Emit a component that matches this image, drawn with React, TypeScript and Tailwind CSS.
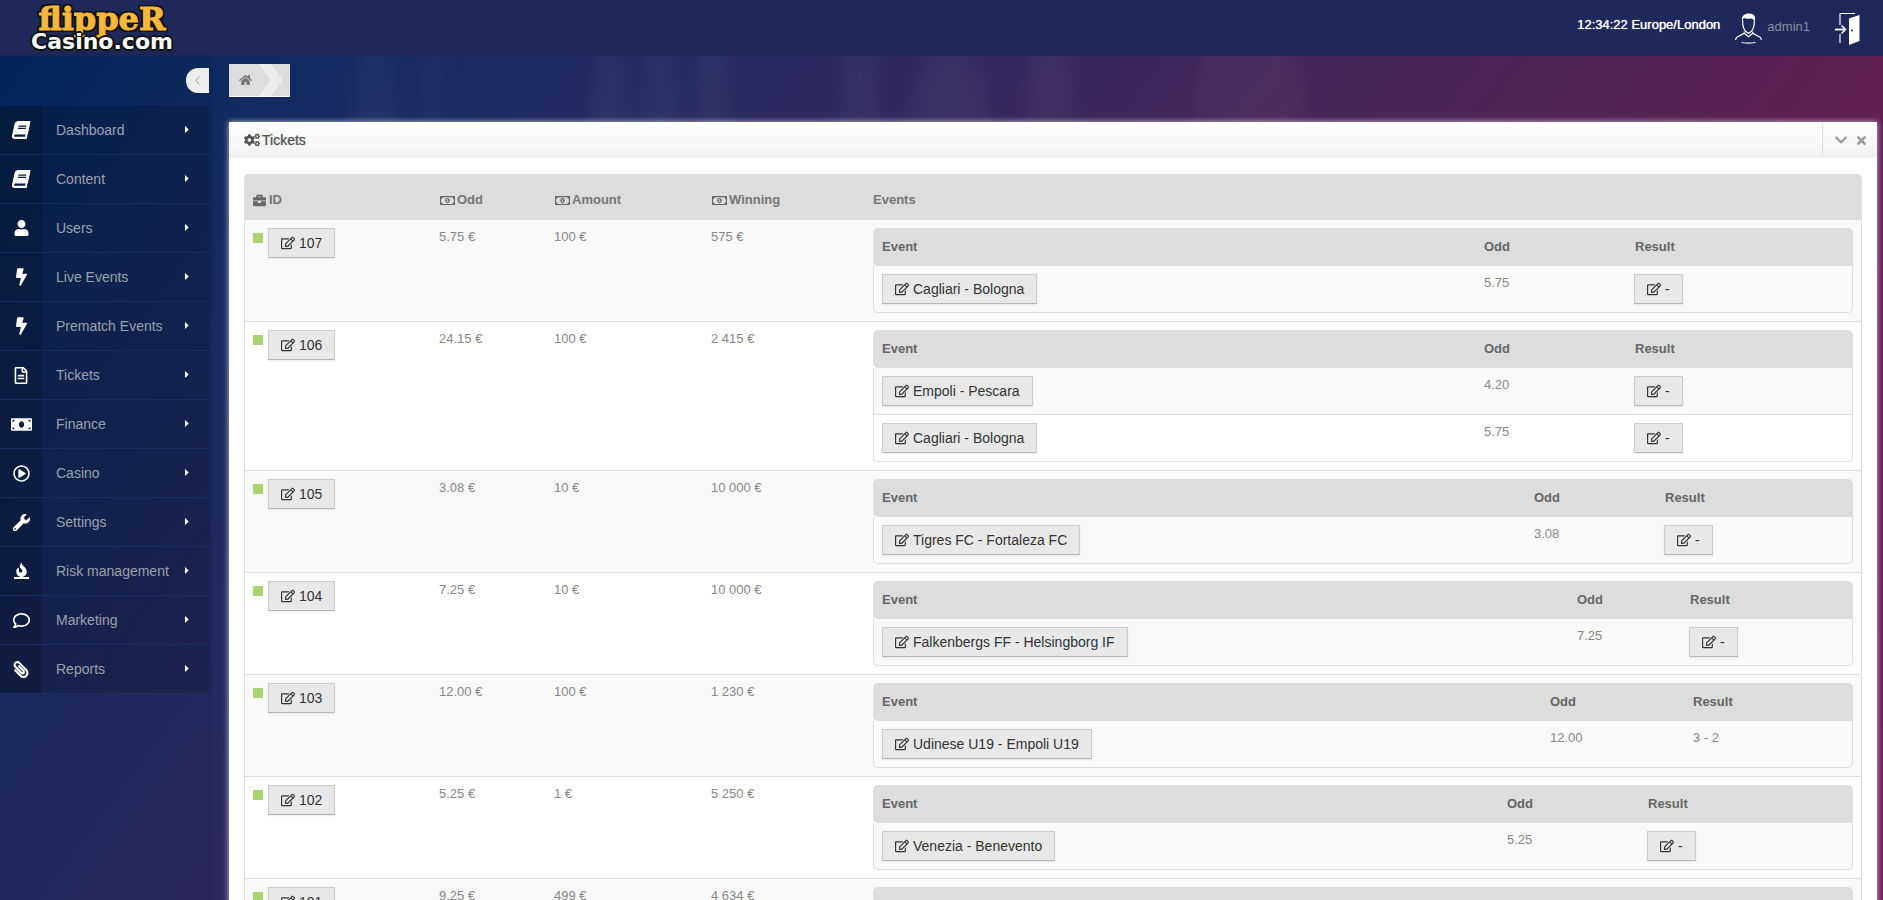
import {
  FaBook,
  FaBolt,
  FaBriefcase,
  FaCaretRight,
  FaChevronDown,
  FaCogs,
  FaFire,
  FaHome,
  FaMoneyBill,
  FaPaperclip,
  FaRegComment,
  FaRegEdit,
  FaRegFileAlt,
  FaRegMoneyBillAlt,
  FaRegPlayCircle,
  FaTimes,
  FaUser,
  FaWrench,
} from 'react-icons/fa';
import { ChevronLeft } from 'lucide-react';
import type { ReactNode } from 'react';

const menu: { label: string; icon: ReactNode }[] = [
  { label: 'Dashboard', icon: <FaBook className="w-[16px] h-[18px] -skew-x-12" /> },
  { label: 'Content', icon: <FaBook className="w-[16px] h-[18px] -skew-x-12" /> },
  { label: 'Users', icon: <FaUser className="w-[15px] h-[16px]" /> },
  { label: 'Live Events', icon: <FaBolt className="w-[11px] h-[18px]" /> },
  { label: 'Prematch Events', icon: <FaBolt className="w-[11px] h-[18px]" /> },
  { label: 'Tickets', icon: <FaRegFileAlt className="w-[14px] h-[17px]" /> },
  { label: 'Finance', icon: <FaMoneyBill className="w-[21px] h-[19px]" /> },
  { label: 'Casino', icon: <FaRegPlayCircle className="w-[17px] h-[17px]" /> },
  { label: 'Settings', icon: <FaWrench className="w-[17px] h-[17px]" /> },
  {
    label: 'Risk management',
    icon: (
      <span className="flex flex-col items-center">
        <FaFire className="w-[11px] h-[14px]" />
        <span className="w-[15px] h-[2px] bg-white" />
      </span>
    ),
  },
  { label: 'Marketing', icon: <FaRegComment className="w-[19px] h-[17px]" /> },
  { label: 'Reports', icon: <FaPaperclip className="w-[16px] h-[17px] -scale-x-100" /> },
];

interface TicketEvent {
  name: string;
  odd: string;
  result?: string;
}

interface Ticket {
  id: number;
  odd: string;
  amount: string;
  winning: string;
  eventCol: string;
  oddCol: string;
  events: TicketEvent[];
}

const tickets: Ticket[] = [
  { id: 107, odd: '5.75 €', amount: '100 €', winning: '575 €', eventCol: 'w-[603px]', oddCol: 'w-[151px]', events: [{ name: 'Cagliari - Bologna', odd: '5.75' }] },
  {
    id: 106, odd: '24.15 €', amount: '100 €', winning: '2 415 €', eventCol: 'w-[603px]', oddCol: 'w-[151px]',
    events: [{ name: 'Empoli - Pescara', odd: '4.20' }, { name: 'Cagliari - Bologna', odd: '5.75' }],
  },
  { id: 105, odd: '3.08 €', amount: '10 €', winning: '10 000 €', eventCol: 'w-[653px]', oddCol: 'w-[131px]', events: [{ name: 'Tigres FC - Fortaleza FC', odd: '3.08' }] },
  { id: 104, odd: '7.25 €', amount: '10 €', winning: '10 000 €', eventCol: 'w-[696px]', oddCol: 'w-[113px]', events: [{ name: 'Falkenbergs FF - Helsingborg IF', odd: '7.25' }] },
  { id: 103, odd: '12.00 €', amount: '100 €', winning: '1 230 €', eventCol: 'w-[669px]', oddCol: 'w-[143px]', events: [{ name: 'Udinese U19 - Empoli U19', odd: '12.00', result: '3 - 2' }] },
  { id: 102, odd: '5.25 €', amount: '1 €', winning: '5 250 €', eventCol: 'w-[626px]', oddCol: 'w-[141px]', events: [{ name: 'Venezia - Benevento', odd: '5.25' }] },
  { id: 101, odd: '9.25 €', amount: '499 €', winning: '4 634 €', eventCol: 'w-[626px]', oddCol: 'w-[141px]', events: [{ name: 'Venezia - Benevento', odd: '9.25' }] },
];

function EditButton({ children }: { children: ReactNode }) {
  return (
    <button className="inline-flex items-center gap-1 h-[30px] px-3 bg-[#e8e8e8] border border-[#ccc] border-b-[#b5b5b5] shadow-[0_1px_2px_rgba(0,0,0,0.08)] text-[14px] text-[#333] whitespace-nowrap">
      <FaRegEdit className="w-[14px] h-[14px]" />
      {children}
    </button>
  );
}

function UserIcon() {
  return (
    <svg viewBox="0 0 28 33" className="w-[27px] h-[33px]" fill="none" stroke="#fff" strokeWidth="1.2">
      <path d="M8 8c-.6 6 1.6 12 6 13.6C18.4 20 20.600 14 20 8" />
      <path d="M7.600 9.500C6 3.500 10 1 14.500 1c5 0 7.500 3 6 8.500-.8-2.500-2.500-3.500-4-3.500-2.500.6-6 .4-7.500-.5-.5 1-.9 2.300-1.400 3.500z" fill="#fff" stroke="none" />
      <path d="M9.500 19.500v2L2 25.500c-1 .6-1.300 1.800-1.300 3M18.500 19.500v2l7.500 4c1 .6 1.300 1.800 1.300 3" />
      <path d="M9.500 21.500l4.500 3.500 4.500-3.500" />
      <path d="M7 30.500c1 1.600 13 1.600 14 0" />
    </svg>
  );
}

function DoorIcon() {
  return (
    <svg viewBox="0 0 25 33" className="w-[25px] h-[33px]" fill="none" stroke="#fff" strokeWidth="1.200">
      <path d="M5 13V2.500c0-.8.500-1 1-1h14" />
      <path d="M5 22v9" />
      <path d="M0 17.500h9" strokeWidth="1.800" />
      <path d="M6.500 13.500l4 4-4 4" strokeWidth="1.500" />
      <path d="M14 6.500L24.500 3v26L14 33z" fill="#fff" stroke="none" />
      <circle cx="17" cy="18.500" r="1" fill="#1e2859" stroke="none" />
    </svg>
  );
}

function EventsTable({ ticket }: { ticket: Ticket }) {
  return (
    <table className="w-[980px] table-fixed border-separate border-spacing-0 text-[13px]">
      <colgroup>
        <col className={ticket.eventCol} />
        <col className={ticket.oddCol} />
        <col />
      </colgroup>
      <thead>
        <tr className="h-[38px] bg-[#ddd] font-bold text-[#666] text-left">
          <th className="pl-[9px] pb-px rounded-tl-[5px] rounded-bl-[5px]">Event</th>
          <th className="pl-2 pb-px">Odd</th>
          <th className="pl-2 pb-px rounded-tr-[5px]">Result</th>
        </tr>
      </thead>
      <tbody>
        {ticket.events.map((ev, i) => {
          const last = i === ticket.events.length - 1;
          const rowBg = i % 2 === 0 ? 'bg-[#f9f9f9]' : 'bg-white';
          return (
            <tr key={ev.name + i} className={rowBg}>
              <td className={`pl-2 py-2 border-l border-b border-[#ddd] align-top leading-none ${last ? 'rounded-bl-[5px]' : ''}`}>
                <EditButton>{ev.name}</EditButton>
              </td>
              <td className="pl-2 pt-2 border-b border-[#ddd] align-top leading-[18px] text-[#888]">{ev.odd}</td>
              <td className={`pl-[7px] pt-2 border-r border-b border-[#ddd] align-top leading-[18px] text-[#888] ${last ? 'rounded-br-[5px]' : ''}`}>
                {ev.result ? <span className="pl-px">{ev.result}</span> : <EditButton>-</EditButton>}
              </td>
            </tr>
          );
        })}
      </tbody>
    </table>
  );
}

function TicketsTable() {
  return (
    <table className="w-[1618px] table-fixed border-separate border-spacing-0 text-[13px]">
      <colgroup>
        <col className="w-[187px]" />
        <col className="w-[115px]" />
        <col className="w-[157px]" />
        <col className="w-[162px]" />
        <col />
      </colgroup>
      <thead>
        <tr className="h-[46px] bg-[#ddd] text-[#777] font-bold text-left">
          <th className="pl-[9px] pt-[6px] rounded-tl-[5px]">
            <span className="flex items-center gap-[3px]"><FaBriefcase className="w-[13px] h-[13px] text-[#666]" />ID</span>
          </th>
          <th className="pl-[9px] pt-[6px]">
            <span className="flex items-center gap-[2px]"><FaRegMoneyBillAlt className="w-[15px] h-[13px] text-[#666]" />Odd</span>
          </th>
          <th className="pl-[9px] pt-[6px]">
            <span className="flex items-center gap-[2px]"><FaRegMoneyBillAlt className="w-[15px] h-[13px] text-[#666]" />Amount</span>
          </th>
          <th className="pl-[9px] pt-[6px]">
            <span className="flex items-center gap-[2px]"><FaRegMoneyBillAlt className="w-[15px] h-[13px] text-[#666]" />Winning</span>
          </th>
          <th className="pl-2 pt-[6px] rounded-tr-[5px]">Events</th>
        </tr>
      </thead>
      <tbody>
        {tickets.map((t, i) => (
          <tr key={t.id} className={i % 2 === 0 ? 'bg-[#f9f9f9]' : 'bg-white'}>
            <td className="pl-2 py-2 align-top border-l border-b border-[#ddd]">
              <div className="flex gap-[5px]">
                <span className="w-[10px] h-[10px] mt-[5px] bg-[#a9d46f]" />
                <EditButton>{t.id}</EditButton>
              </div>
            </td>
            <td className="pl-2 pt-2 align-top border-b border-[#ddd] text-[#888] leading-[18px]">{t.odd}</td>
            <td className="pl-2 pt-2 align-top border-b border-[#ddd] text-[#888] leading-[18px]">{t.amount}</td>
            <td className="pl-2 pt-2 align-top border-b border-[#ddd] text-[#888] leading-[18px]">{t.winning}</td>
            <td className="pl-2 py-2 align-top border-b border-r border-[#ddd]">
              <EventsTable ticket={t} />
            </td>
          </tr>
        ))}
      </tbody>
    </table>
  );
}

export default function App() {
  return (
    <div className="relative h-[900px] overflow-hidden flex flex-col bg-[linear-gradient(127deg,#00285c_0%,#0e2b60_10%,#2b2a60_33%,#5e2052_75%,#6e1f5e_100%)] [font-family:'Liberation_Sans',Arial,sans-serif]">
      {/* faint statue texture behind the page */}
      <svg className="absolute left-0 top-0 w-[1883px] h-[900px] pointer-events-none" viewBox="0 0 1883 900">
        <defs>
          <filter id="soft"><feGaussianBlur stdDeviation="9" /></filter>
        </defs>
        <g fill="#ffffff" opacity="0.035" filter="url(#soft)">
          <ellipse cx="375" cy="110" rx="22" ry="70" />
          <ellipse cx="433" cy="90" rx="8" ry="60" />
          <ellipse cx="660" cy="100" rx="18" ry="80" />
          <ellipse cx="610" cy="110" rx="20" ry="70" />
          <ellipse cx="712" cy="100" rx="16" ry="80" />
          <ellipse cx="860" cy="100" rx="18" ry="70" />
          <ellipse cx="950" cy="115" rx="38" ry="70" />
          <ellipse cx="1050" cy="100" rx="22" ry="80" />
          <ellipse cx="1250" cy="100" rx="55" ry="75" />
        </g>
      </svg>

      <header className="relative h-[56px] shrink-0 flex items-center bg-[#1e2859]">
        <div className="w-[209px] shrink-0 pl-[29px]">
          <div className="w-[146px] flex flex-col items-center">
            <span className="h-[27px] text-[32px] font-bold leading-[27px] text-[#f6b73c] tracking-[0px] [font-family:'DejaVu_Serif',serif] [-webkit-text-stroke:1px_#f6b73c] [text-shadow:2px_0_#111,-2px_0_#111,0_2px_#111,0_-2px_#111,2px_2px_#111,-2px_-2px_#111,2px_-2px_#111,-2px_2px_#111]">
              flippeR
            </span>
            <span className="h-[18px] text-[22px] font-bold leading-[18px] text-white [font-family:'DejaVu_Sans',sans-serif] [text-shadow:2px_0_#111,-2px_0_#111,0_2px_#111,0_-2px_#111,1px_1px_#111,-1px_-1px_#111,1px_-1px_#111,-1px_1px_#111]">
              Casino.com
            </span>
          </div>
        </div>
        <div className="ml-auto flex items-center pr-[23px]">
          <span className="mb-[6px] text-[13px] text-white [text-shadow:0_0_1px_#fff]">12:34:22 Europe/London</span>
          <span className="ml-[15px]"><UserIcon /></span>
          <span className="ml-[5px] mb-[3px] text-[13px] text-[#8a8d9c]">admin1</span>
          <span className="ml-[25px]"><DoorIcon /></span>
        </div>
      </header>

      <div className="relative flex-1 flex min-h-0">
        <aside className="w-[209px] shrink-0 flex flex-col bg-black/5 shadow-[2px_0_5px_rgba(0,0,0,0.18)]">
          <div className="h-[50px] shrink-0 flex justify-end pt-[12px]">
            <button className="w-[23px] h-[25px] bg-[#eee] rounded-l-[12px] flex items-center justify-center">
              <ChevronLeft className="w-[15px] h-[15px] text-[#999]" strokeWidth={1.5} />
            </button>
          </div>
          {menu.map((item) => (
            <div key={item.label} className="h-[49px] flex bg-black/15 border-b border-[#2a4a8a]/30 text-[14px] text-[#9aa1ad]">
              <span className="w-[42px] flex items-center justify-center text-white bg-black/15">{item.icon}</span>
              <span className="flex-1 pl-[14px] pt-px flex items-center">{item.label}</span>
              <span className="w-[26px] pb-px flex items-center text-white"><FaCaretRight className="w-[8px] h-[11px]" /></span>
            </div>
          ))}
        </aside>

        <main className="flex-1 min-w-0 pl-[20px] pr-[6px] pt-[8px] flex flex-col">
          <div className="relative w-[61px] h-[33px] shrink-0 bg-[#ddd] border-b border-white flex items-center pl-[10px]">
            <FaHome className="w-[13px] h-[12px] text-[#777]" />
            <svg className="absolute left-[30px] top-0 w-[24px] h-[32px]" viewBox="0 0 24 32">
              <path d="M0 0h12l12 16-12 16H0l11-16z" fill="#ececec" />
            </svg>
          </div>

          <section className="mt-[25px] flex-1 bg-white shadow-[0_0_6px_rgba(255,255,255,0.7)]">
            <div className="h-[36px] flex items-center pl-[15px] bg-[linear-gradient(#ffffff,#f1f1f1)]">
              <FaCogs className="w-[16px] h-[14px] text-[#555]" />
              <span className="ml-[2px] pt-px text-[14px] text-[#555] [text-shadow:0_0_1px_rgba(0,0,0,0.45)]">Tickets</span>
              <div className="ml-auto flex items-center h-[32px] pl-[11px] pr-[9px] gap-[7px] border-l border-[#ddd] text-[#999]">
                <FaChevronDown className="w-[14px] h-[14px]" />
                <FaTimes className="w-[13px] h-[13px]" />
              </div>
            </div>
            <div className="px-[15px] pt-[16px]">
              <TicketsTable />
            </div>
          </section>
        </main>
      </div>
    </div>
  );
}
